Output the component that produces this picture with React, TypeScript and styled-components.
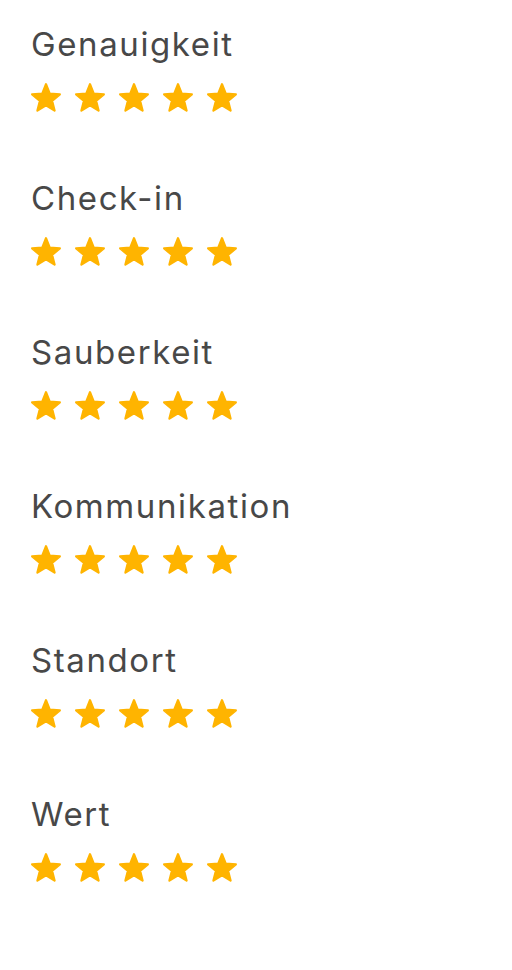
import React from 'react';
import styled, { createGlobalStyle } from 'styled-components';

const GlobalStyle = createGlobalStyle`
  body {
    margin: 0;
    background: #ffffff;
    font-family: Inter, 'Noto Sans', sans-serif;
    color: #484848;
  }
`;

const List = styled.section`
  display: flex;
  flex-direction: column;
  padding: 24px 31px 0;
`;

const Category = styled.div`
  display: flex;
  flex-direction: column;
  gap: 19px;
  height: 154px;
`;

const Label = styled.h3`
  margin: 0;
  font-size: 33px;
  font-weight: 400;
  line-height: 40px;
  letter-spacing: 1.6px;
`;

const Stars = styled.div`
  display: flex;
  gap: 14px;
`;

const categories = [
  'Genauigkeit',
  'Check-in',
  'Sauberkeit',
  'Kommunikation',
  'Standort',
  'Wert'
];

// five-pointed star, slightly plump, tips rounded by the stroke
const starPoints = Array.from({ length: 10 }, (_, i) => {
  const r = i % 2 === 0 ? 14.6 : 6.4;
  const a = (Math.PI / 5) * i - Math.PI / 2;
  return `${(15 + r * Math.cos(a)).toFixed(2)},${(15.8 + r * Math.sin(a)).toFixed(2)}`;
}).join(' ');

function Star() {
  return (
    <svg width="30" height="29" viewBox="0 0 30 29">
      <polygon
        points={starPoints}
        fill="#ffb400"
        stroke="#ffb400"
        strokeWidth="2.2"
        strokeLinejoin="round"
      />
    </svg>
  );
}

export default function App() {
  return (
    <>
      <GlobalStyle />
      <List>
        {categories.map((name) => (
          <Category key={name}>
            <Label>{name}</Label>
            <Stars>
              {[0, 1, 2, 3, 4].map((i) => (
                <Star key={i} />
              ))}
            </Stars>
          </Category>
        ))}
      </List>
    </>
  );
}
